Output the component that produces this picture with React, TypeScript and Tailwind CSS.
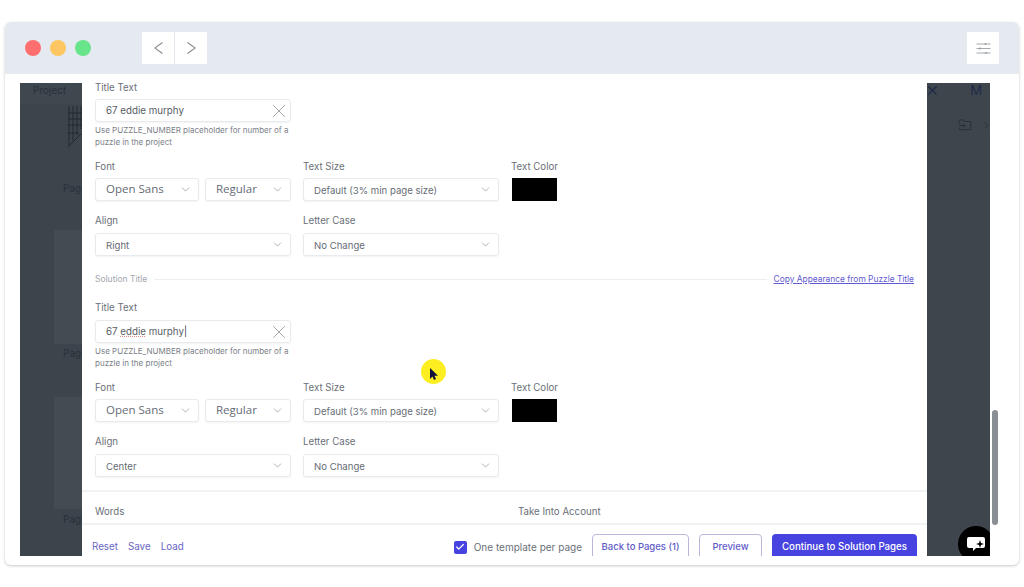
import React from "react";
import { ChevronDown, ChevronRight, X, Check, FolderInput } from "lucide-react";

const font = { fontFamily: "Inter, sans-serif" };

function Label({ children, className = "" }: { children: React.ReactNode; className?: string }) {
  return <div className={`text-[9.7px] leading-[12px] text-[#6b7078] ${className}`}>{children}</div>;
}

function Select({ value, w, big = false }: { value: string; w: string; big?: boolean }) {
  return (
    <div className={`${w} h-[23px] rounded-[3px] border border-[#e8eaee] bg-white flex items-center justify-between pl-[10px] pr-[6px] shadow-[0_1px_2px_rgba(0,0,0,0.05)]`}>
      <span className={big ? "mb-[1px] text-[11.5px] text-[#666c75] font-['Open_Sans']" : "mt-[3px] text-[9.6px] text-[#666c75]"}>{value}</span>
      <ChevronDown size={13} strokeWidth={1} className="text-[#6b7280]" />
    </div>
  );
}

function TitleBlock({ align, caret }: { align: string; caret?: boolean }) {
  return (
    <div>
      <Label>Title Text</Label>
      <div className={`${caret ? "mt-[6px]" : "mt-[5px]"} w-[196px] h-[23px] rounded-[3px] border border-[#e8eaee] flex items-center justify-between pl-[10px] pr-[0px] shadow-[0_1px_2px_rgba(0,0,0,0.05)]`}>
        <span className="mt-[2px] text-[9.75px] text-[#565c64]">
          {caret ? (
            <>
              67 <span className="underline decoration-dotted decoration-[#e08a8a] decoration-[0.5px]">eddie</span> murphy<span className="text-black font-light">|</span>
            </>
          ) : (
            "67 eddie murphy"
          )}
        </span>
        <X size={22} strokeWidth={0.6} className="text-[#555b63]" />
      </div>
      <div className="mt-[3px] w-[200px] text-[8px] leading-[11.5px] text-[#7b8088]">
        Use PUZZLE_NUMBER placeholder for number of a puzzle in the project
      </div>
      <div className="mt-[13px] flex gap-[12px]">
        <div className="w-[196px]">
          <Label>Font</Label>
          <div className="mt-[5px] flex gap-[6px]">
            <Select value="Open Sans" w="w-[104px]" big />
            <Select value="Regular" w="w-[86px]" big />
          </div>
        </div>
        <div className="w-[196px]">
          <Label>Text Size</Label>
          <div className="mt-[5px]">
            <Select value="Default (3% min page size)" w="w-[196px]" />
          </div>
        </div>
        <div>
          <Label>Text Color</Label>
          <div className="mt-[5px] ml-[1px] w-[45px] h-[23px] bg-black" />
        </div>
      </div>
      <div className="mt-[14px] flex gap-[12px]">
        <div className="w-[196px]">
          <Label>Align</Label>
          <div className="mt-[6px]">
            <Select value={align} w="w-[196px]" />
          </div>
        </div>
        <div className="w-[196px]">
          <Label>Letter Case</Label>
          <div className="mt-[6px]">
            <Select value="No Change" w="w-[196px]" />
          </div>
        </div>
      </div>
    </div>
  );
}

function Ghost({ children, className = "" }: { children: React.ReactNode; className?: string }) {
  return <div className={`text-[10px] leading-[12px] text-[#2a3038] ${className}`}>{children}</div>;
}

export default function App() {
  return (
    <div className="w-[1024px] h-[587px] bg-white overflow-hidden pt-[22px] px-[5px]" style={font}>
      <div className="relative w-[1014px] h-[543px] rounded-[6px] bg-white shadow-[0_1px_3px_rgba(0,0,0,0.22)] overflow-hidden flex flex-col">
        {/* top bar */}
        <div className="h-[52px] shrink-0 bg-[#e5eaf0] flex items-center justify-between pl-[20px] pr-[20px]">
          <div className="flex items-center">
            <span className="w-4 h-4 rounded-full bg-[#ff6f6f]" />
            <span className="ml-[9px] w-4 h-4 rounded-full bg-[#fdc661]" />
            <span className="ml-[9px] w-4 h-4 rounded-full bg-[#68e58b]" />
            <div className="ml-[51px] flex gap-[1px]">
              <div className="w-[32px] h-[32px] bg-white flex items-center justify-center">
                <svg width="9" height="12" viewBox="0 0 9 12" fill="none" stroke="#858b91" strokeWidth="1.1">
                  <path d="M8.5 0.5L0.8 6L8.5 11.5" />
                </svg>
              </div>
              <div className="w-[32px] h-[32px] bg-white flex items-center justify-center">
                <svg width="9" height="12" viewBox="0 0 9 12" fill="none" stroke="#858b91" strokeWidth="1.1">
                  <path d="M0.5 0.5L8.2 6L0.5 11.5" />
                </svg>
              </div>
            </div>
          </div>
          <div className="w-[32px] h-[32px] bg-white flex items-center justify-center">
            <svg width="15" height="13" viewBox="0 0 15 13" fill="none" stroke="#9a9fa5" strokeWidth="0.9">
              <path d="M0.5 2H14.5M0.5 6.5H14.5M0.5 11H14.5" />
              <path d="M9.5 1V3M4 5.5V7.5M10 10V12" strokeWidth="1.4" />
            </svg>
          </div>
        </div>

        {/* body */}
        <div className="flex-1 min-h-0 pt-[9px] pl-[15px] pr-[6px] flex gap-[2px]">
          <div className="relative w-[970px] h-[473px] flex overflow-hidden bg-[#3c444c]">
            {/* dimmed left */}
            <div className="w-[62px] shrink-0 overflow-hidden flex flex-col">
              <div className="h-[21px] pt-[1px] pl-[13px] bg-[#3f474f]">
                <Ghost>Project</Ghost>
              </div>
              <div className="h-[78px] pl-[47px] pt-[1px]">
                <svg width="15" height="44" viewBox="0 0 15 44" fill="none" stroke="#23282e" strokeWidth="1">
                  <path d="M2 1V40M6 1V36M10 1V30M14 1V24M1 8H15M1 14H15M1 20H15M1 28H12M1 42L15 28" />
                </svg>
              </div>
              <Ghost className="pl-[43px] whitespace-nowrap">Page</Ghost>
              <div className="h-[36px]" />
              <div className="ml-[34px] h-[114px] bg-[#434b53]" />
              <Ghost className="pl-[43px] mt-[3px] whitespace-nowrap">Page</Ghost>
              <div className="h-[38px]" />
              <div className="ml-[34px] h-[112px] bg-[#434b53]" />
              <Ghost className="pl-[43px] mt-[4px] whitespace-nowrap">Page</Ghost>
            </div>

            {/* modal */}
            <div className="w-[845px] shrink-0 bg-white flex flex-col">
              <div className="h-[407px] shrink-0 pl-[13px] pr-[13px] overflow-hidden -mt-[1px]">
                <TitleBlock align="Right" />
                <div className="mt-[17px] flex items-center h-[12px]">
                  <span className="text-[8.5px] text-[#a3a7ad]">Solution Title</span>
                  <span className="mx-[7px] flex-1 h-px bg-[#eceef0]" />
                  <span className="text-[8.4px] text-[#5f5bd0] underline">Copy Appearance from Puzzle Title</span>
                </div>
                <div className="mt-[17px]">
                  <TitleBlock align="Center" caret />
                </div>
              </div>
              <div className="h-[35px] shrink-0 border-y-2 border-[#f1f2f4] flex items-center pl-[13px] pt-[8px] mt-[1px]">
                <Label className="w-[423px]">Words</Label>
                <Label>Take Into Account</Label>
              </div>
              <div className="flex-1 min-h-0 flex items-start justify-between pl-[10px] pr-[10px] pt-[9px]">
                <div className="pt-[7px] flex gap-[10px] text-[9.8px] leading-[12px] text-[#6a66c4]">
                  <span>Reset</span>
                  <span>Save</span>
                  <span>Load</span>
                </div>
                <div className="flex items-center gap-[10px]">
                  <span className="mr-[-3px] w-[13px] h-[13px] rounded-[2px] bg-[#4643e0] flex items-center justify-center">
                    <Check size={10} strokeWidth={3} className="text-white" />
                  </span>
                  <span className="text-[10px] text-[#6b7078]">One template per page</span>
                  <div className="h-[26px] w-[97px] rounded-[4px] border border-[#b8b8dc] text-[9.5px] font-medium text-[#5f5bc8] flex items-center justify-center">
                    Back to Pages (1)
                  </div>
                  <div className="h-[26px] w-[63px] rounded-[4px] border border-[#b8b8dc] text-[9.5px] font-medium text-[#5f5bc8] flex items-center justify-center">
                    Preview
                  </div>
                  <div className="h-[26px] w-[145px] rounded-[4px] bg-[#4643e0] text-[9.7px] font-medium text-white flex items-center justify-center">
                    Continue to Solution Pages
                  </div>
                </div>
              </div>
            </div>

            {/* dimmed right */}
            <div className="flex-1 bg-[#3e454d] overflow-hidden">
              <div className="h-[15px] flex items-center justify-between pr-[8px] text-[13px] text-[#1e2a4a]">
                <X size={15} strokeWidth={1.8} className="ml-[-2px]" />
                <span>M</span>
              </div>
              <div className="mt-[20px] flex items-center justify-end gap-[9px] text-[#23282e]">
                <FolderInput size={14} strokeWidth={1.2} />
                <ChevronRight size={11} strokeWidth={1.4} className="mr-[-2px]" />
              </div>
            </div>

            {/* chat bubble */}
            <div className="absolute left-[938px] top-[443px] w-[36px] h-[36px] rounded-full bg-black flex items-center justify-center">
              <svg width="20" height="18" viewBox="0 0 20 18">
                <path d="M3 2H17Q19 2 19 4V11Q19 13 17 13H10L7 16V13H3Q1 13 1 11V4Q1 2 3 2Z" fill="#fff" />
                <path d="M14 5L15 8L18 9L15 10L14 13L13 10L10 9L13 8Z" fill="#000" />
              </svg>
            </div>

            {/* cursor highlight */}
            <div className="absolute left-[401px] top-[276px] w-[25px] h-[25px] rounded-full bg-[#fdee21] flex items-center justify-center">
              <svg width="9" height="12" viewBox="0 0 9 12" className="mt-[4px]">
                <path d="M1 0V11L3.5 8.5L5 12L7 11L5.5 7.8H9Z" fill="#10103a" />
              </svg>
            </div>
          </div>

          {/* scrollbar */}
          <div className="w-[6px] h-[473px] flex flex-col justify-end pb-[31px]">
            <div className="h-[115px] rounded-full bg-[#8a8f95]" />
          </div>
        </div>
      </div>
    </div>
  );
}
